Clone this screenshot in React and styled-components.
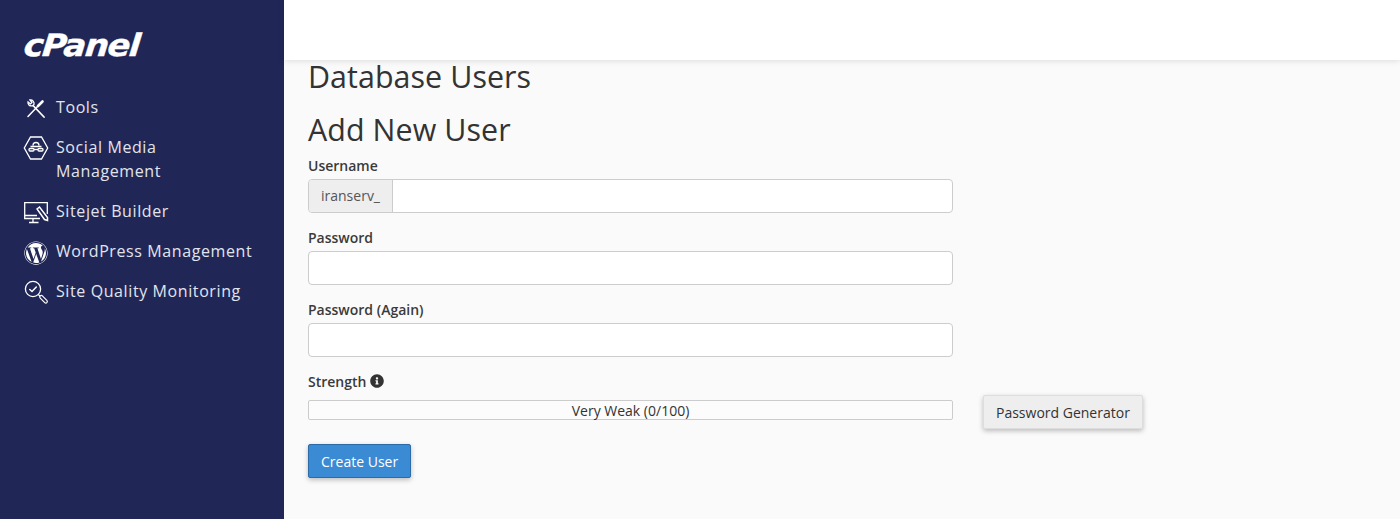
import React from "react";
import styled, { createGlobalStyle } from "styled-components";
import { FaWordpress, FaInfoCircle } from "react-icons/fa";

const NAVY = "#202757";

const Global = createGlobalStyle`
  html, body { margin: 0; padding: 0; height: 100%; background: #fafafa; overflow: hidden; }
  body { font-family: "Open Sans", "Liberation Sans", sans-serif; color: #333; }
  * { box-sizing: border-box; }
`;

const Shell = styled.div`display: flex; height: 519px;`;
const Sidebar = styled.aside`width: 284px; flex: none; background: ${NAVY}; padding: 30px 24px 0;`;
const Logo = styled.div`
  font-family: "DejaVu Sans", sans-serif; font-weight: 700; font-style: italic;
  font-size: 31px; line-height: 30px; color: #fff; letter-spacing: -1.2px; height: 30px;
  -webkit-text-stroke: 0.4px #fff;
  transform-origin: left center; transform: scaleX(1.085) skewX(-5deg);
`;
const Nav = styled.nav`display: flex; flex-direction: column; gap: 16px; margin-top: 35px;`;
const NavItem = styled.a`
  display: flex; align-items: flex-start; gap: 8px; color: #e2e4ec;
  font-size: 16px; line-height: 24px; letter-spacing: 0.6px;
`;
const NavIcon = styled.svg`
  width: 24px; height: 24px; flex: none; margin: 1px 0 -1px; overflow: visible;
  fill: none; stroke: #fff; stroke-width: 1.3;
`;
const WordpressIcon = styled(FaWordpress)`
  width: 24px; height: 24px; flex: none; margin: 2px 0 -2px; color: #fff;
`;
const Content = styled.div`flex: 1; min-width: 0; display: flex; flex-direction: column;`;
const TopBar = styled.header`height: 60px; flex: none; background: #fff; box-shadow: 0 1px 6px rgba(0,0,0,.12); position: relative;`;
const Main = styled.main`padding: 0 24px;`;
const Title = styled.h1`font-weight: 400; font-size: 30.4px; letter-spacing: 0.07px; line-height: 36px; margin: -1px 0 0; color: #333;`;
const SubTitle = styled(Title).attrs({ as: "h2" })`margin-top: 17px;`;
const Form = styled.form`width: 645px; margin-top: 8px; display: flex; flex-direction: column; gap: 15px;`;
const Field = styled.div`display: flex; flex-direction: column;`;
const Label = styled.label`font-size: 14px; font-weight: 600; line-height: 20px; margin-bottom: 3px; color: #3a3a3a; display: flex; align-items: center; gap: 4px;`;
const InfoIcon = styled(FaInfoCircle)`width: 14px; height: 14px; color: #333; margin-top: -2px;`;
const InputWrap = styled.div`display: flex; height: 34px; border: 1px solid #ccc; border-radius: 4px; background: #fff; overflow: hidden;`;
const Prefix = styled.span`padding: 0 12px; background: #eee; border-right: 1px solid #ccc; color: #555; font-size: 14px; line-height: 32px;`;
const Input = styled.input`flex: 1; min-width: 0; border: 0; background: transparent; outline: 0;`;
const StrengthRow = styled.div`display: flex; align-items: flex-start; gap: 30px; width: 835px;`;
const Meter = styled.div`width: 645px; flex: none; height: 20px; margin-top: 5px; border: 1px solid #ccc; border-radius: 2px; background: #fcfcfc; text-align: center; font-size: 14px; line-height: 20px; color: #333;`;
const Button = styled.button`
  font-family: inherit; font-size: 14px; height: 34px; border-radius: 2px; padding: 0 12px;
  box-shadow: 0 2px 5px rgba(0,0,0,.25); cursor: pointer;
`;
const Ghost = styled(Button)`background: #eee; border: 1px solid #ddd; color: #333; flex: none;`;
const Primary = styled(Button)`background: #3a8ad4; border: 1px solid #2b6ca8; color: #fff; align-self: flex-start;`;

const ToolsIcon = () => (
  <NavIcon viewBox="0 0 24 24" strokeLinecap="round">
    <path d="M6 4 8 6.500 6.500 8 4 6C3.500 8 5.500 10.500 8.500 9.800L10 8.500C10.500 6 8.500 3.500 6 4z" />
    <path d="M9.500 10 20 21" strokeWidth="1.800" />
    <path d="M18.500 5.500 14 10" strokeWidth="2.600" />
    <path d="M13.500 10.500 4 20.500" strokeWidth="1.500" />
  </NavIcon>
);
const SocialIcon = () => (
  <NavIcon viewBox="0 0 24 24">
    <path d="M6.500 1h11L23.700 12 17.500 23h-11L.3 12z" />
    <path d="M9 9.500c0-4 6-4 6 0M6.500 10.500h11" />
    <rect x="5" y="12.500" width="5" height="2.500" rx="1" />
    <rect x="14" y="12.500" width="5" height="2.500" rx="1" />
    <path d="M10 13.500h4" />
  </NavIcon>
);
const SitejetIcon = () => (
  <NavIcon viewBox="0 0 24 24">
    <path d="M16 18.500H.7V2.700h22.600V14M1 15.500h12M9 19v3M5 22.500h9.500" />
    <path d="M13 9 15.500 7l8 10.500v3l-3-1z" fill={NAVY} strokeWidth="1.500" />
  </NavIcon>
);
const QualityIcon = () => (
  <NavIcon viewBox="0 0 24 24" strokeLinecap="round">
    <circle cx="9" cy="9" r="7.600" />
    <path d="M5.800 9.500 8 11.500 12.300 7" strokeWidth="1.500" />
    <path d="M14.800 15 16 16.200" />
    <path d="M17.300 17 21.800 21.500" strokeWidth="4.200" />
    <path d="M17.300 17 21.800 21.500" strokeWidth="1.800" stroke={NAVY} />
  </NavIcon>
);

const items = [
  ["Tools", <ToolsIcon />],
  [<>Social Media<br />Management</>, <SocialIcon />],
  ["Sitejet Builder", <SitejetIcon />],
  ["WordPress Management", <WordpressIcon />],
  ["Site Quality Monitoring", <QualityIcon />],
];

export default function App() {
  return (
    <Shell>
      <Global />
      <Sidebar>
        <Logo>cPanel</Logo>
        <Nav>
          {items.map(([label, icon], i) => (
            <NavItem key={i}>{icon}<span>{label}</span></NavItem>
          ))}
        </Nav>
      </Sidebar>
      <Content>
        <TopBar />
        <Main>
          <Title>Database Users</Title>
          <SubTitle>Add New User</SubTitle>
          <Form>
            <Field><Label>Username</Label><InputWrap><Prefix>iranserv_</Prefix><Input /></InputWrap></Field>
            <Field><Label>Password</Label><InputWrap><Input /></InputWrap></Field>
            <Field><Label>Password (Again)</Label><InputWrap><Input /></InputWrap></Field>
            <Field>
              <Label>Strength <InfoIcon /></Label>
              <StrengthRow><Meter>Very Weak (0/100)</Meter><Ghost type="button">Password Generator</Ghost></StrengthRow>
            </Field>
            <Primary type="button">Create User</Primary>
          </Form>
        </Main>
      </Content>
    </Shell>
  );
}
